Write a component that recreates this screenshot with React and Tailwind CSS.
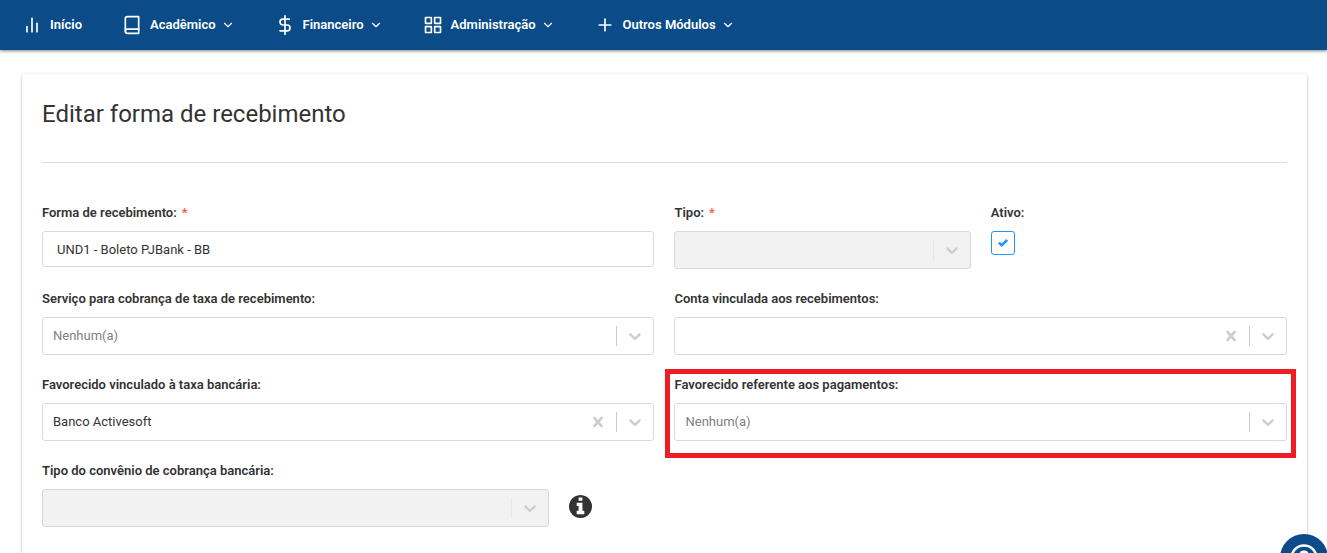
import React, { useState } from 'react';
import { ChevronDown, CircleHelp } from 'lucide-react';
import { FiBarChart2, FiBook, FiDollarSign, FiGrid, FiPlus } from 'react-icons/fi';

const menu = [
  { label: 'Início', icon: FiBarChart2 },
  { label: 'Acadêmico', icon: FiBook, hasSub: true },
  { label: 'Financeiro', icon: FiDollarSign, hasSub: true },
  { label: 'Administração', icon: FiGrid, hasSub: true },
  { label: 'Outros Módulos', icon: FiPlus, hasSub: true },
];

function Label({ htmlFor, required, children }) {
  return (
    <label htmlFor={htmlFor} className="block h-5 mb-2 text-[13px] leading-5 font-semibold whitespace-nowrap">
      {children}
      {required && <span className="ml-[5px] text-[#ff5252]">*</span>}
    </label>
  );
}

function SelectBox({ id, name, value, options = [], disabled, placeholder, clearable, onChange }) {
  const box = disabled ? 'bg-[#f2f2f2]' : 'bg-white';
  const line = disabled ? 'bg-[#e6e6e6]' : 'bg-[#cccccc]';
  return (
    <div className={`flex items-center h-[38px] w-full border border-[#d9d9d9] rounded-[3px] ${box}`}>
      <select
        id={id}
        name={name}
        value={value}
        disabled={disabled}
        onChange={onChange}
        className={`flex-1 min-w-0 h-full px-[10px] appearance-none bg-transparent text-[13px] focus:outline-none ${placeholder ? 'text-[#808080]' : 'text-[#333333]'}`}
      >
        {options.map((opt) => (
          <option key={opt} value={opt}>{opt}</option>
        ))}
      </select>
      {clearable && (
        <button type="button" aria-label="Limpar" className="px-2 text-[#cccccc]">
          <svg viewBox="0 0 20 20" className="w-5 h-5 fill-current stroke-current" strokeWidth="0.4">
            <path d="M14.348 14.849c-0.469 0.469-1.229 0.469-1.697 0l-2.651-3.030-2.651 3.029c-0.469 0.469-1.229 0.469-1.697 0-0.469-0.469-0.469-1.229 0-1.697l2.758-3.15-2.759-3.152c-0.469-0.469-0.469-1.228 0-1.697s1.228-0.469 1.697 0l2.652 3.031 2.651-3.031c0.469-0.469 1.228-0.469 1.697 0s0.469 1.229 0 1.697l-2.758 3.152 2.758 3.15c0.469 0.469 0.469 1.229 0 1.698z" />
          </svg>
        </button>
      )}
      <span className={`w-px h-5 ${line}`} />
      <span className="px-2 text-[#cccccc]">
        <svg viewBox="0 0 20 20" className="w-5 h-5 fill-current">
          <path d="M4.516 7.548c0.436-0.446 1.043-0.481 1.576 0l3.908 3.747 3.908-3.747c0.533-0.481 1.141-0.446 1.574 0 0.436 0.445 0.408 1.197 0 1.615-0.406 0.418-4.695 4.502-4.695 4.502-0.217 0.223-0.502 0.335-0.787 0.335s-0.57-0.112-0.789-0.335c0 0-4.287-4.084-4.695-4.502s-0.436-1.17 0-1.615z" />
        </svg>
      </span>
    </div>
  );
}

function InfoIcon() {
  return (
    <svg viewBox="0 0 1536 1536" className="w-[23px] h-[23px] fill-current">
      <path d="M1024 1248v-160q0-14-9-23t-23-9h-96v-512q0-14-9-23t-23-9h-320q-14 0-23 9t-9 23v160q0 14 9 23t23 9h96v320h-96q-14 0-23 9t-9 23v160q0 14 9 23t23 9h448q14 0 23-9t9-23zM896 352v-160q0-14-9-23t-23-9h-192q-14 0-23 9t-9 23v160q0 14 9 23t23 9h192q14 0 23-9t9-23zM1536 768q0 209-103 385.5t-279.5 279.5-385.5 103-385.5-103-279.5-279.5-103-385.5 103-385.5 279.5-279.5 385.5-103 385.5 103 279.5 279.5 103 385.5z" />
    </svg>
  );
}

export default function App() {
  const [form, setForm] = useState({
    nome: 'UND1 - Boleto PJBank - BB',
    ativo: true,
    servico: 'Nenhum(a)',
    taxa: 'Banco Activesoft',
    pagamentos: 'Nenhum(a)',
  });

  const handleChange = (e) => {
    const { name, value, type, checked } = e.target;
    setForm(prev => ({ ...prev, [name]: type === 'checkbox' ? checked : value }));
  };

  return (
    <div className="min-h-screen bg-white text-[#333333] font-['Roboto',sans-serif]">
      <header className="h-[50px] bg-[#0a4b88] shadow-[0_1px_3px_rgba(0,0,0,0.5)]">
        <nav className="flex items-center gap-10 h-full px-[22px]">
          {menu.map(({ label, icon: Icon, hasSub }) => (
            <a key={label} href="#" className="flex items-center text-[13px] leading-5 font-semibold text-white whitespace-nowrap">
              <Icon className="w-5 h-5 mr-2" />
              {label}
              {hasSub && <ChevronDown className="w-3.5 h-3.5 ml-[5px]" />}
            </a>
          ))}
        </nav>
      </header>

      <main className="pl-[22px] pr-5 pt-6">
        <div className="px-5 pb-12 rounded-[3px] bg-white shadow-[0_1px_3px_rgba(0,0,0,0.3)]">
          <h1 className="pt-6 pb-8 text-2xl leading-8 font-normal border-b border-[#dddddd]">Editar forma de recebimento</h1>

          <form className="grid grid-cols-12 gap-5 pt-10" onSubmit={(e) => e.preventDefault()}>
            <div className="col-span-6">
              <Label htmlFor="nome" required>Forma de recebimento:</Label>
              <input
                id="nome"
                name="nome"
                type="text"
                value={form.nome}
                onChange={handleChange}
                className="block w-full h-9 px-[14px] text-[13px] border border-[#d9d9d9] rounded-[3px] focus:outline-none"
              />
            </div>
            <div className="col-span-3">
              <Label htmlFor="tipo" required>Tipo:</Label>
              <SelectBox id="tipo" name="tipo" disabled />
            </div>
            <div className="col-span-3">
              <Label htmlFor="ativo">Ativo:</Label>
              <div className="grid w-6 h-6">
                <input
                  id="ativo"
                  name="ativo"
                  type="checkbox"
                  checked={form.ativo}
                  onChange={handleChange}
                  className="col-start-1 row-start-1 w-6 h-6 appearance-none border border-[#2196f3] rounded-[3px]"
                />
                {form.ativo && (
                  <svg viewBox="0 0 10 8" className="col-start-1 row-start-1 place-self-center w-[10px] h-2 pointer-events-none" fill="none" stroke="#2196f3" strokeWidth="2.5">
                    <path d="M0.8 3.6 L3.7 6.2 L9.2 1" />
                  </svg>
                )}
              </div>
            </div>

            <div className="col-span-6">
              <Label htmlFor="servico">Serviço para cobrança de taxa de recebimento:</Label>
              <SelectBox id="servico" name="servico" value={form.servico} options={['Nenhum(a)']} placeholder onChange={handleChange} />
            </div>
            <div className="col-span-6">
              <Label htmlFor="conta">Conta vinculada aos recebimentos:</Label>
              <SelectBox id="conta" name="conta" clearable />
            </div>

            <div className="col-span-6">
              <Label htmlFor="taxa">Favorecido vinculado à taxa bancária:</Label>
              <SelectBox id="taxa" name="taxa" value={form.taxa} options={['Banco Activesoft']} clearable onChange={handleChange} />
            </div>
            <div className="relative col-span-6">
              <Label htmlFor="pagamentos">Favorecido referente aos pagamentos:</Label>
              <SelectBox id="pagamentos" name="pagamentos" value={form.pagamentos} options={['Nenhum(a)']} placeholder onChange={handleChange} />
              {/* highlight frame */}
              <div className="absolute -inset-x-[9px] -top-[6px] -bottom-[17px] border-[5px] border-[#ee1c24] pointer-events-none" />
            </div>

            <div className="col-span-5">
              <Label htmlFor="convenio">Tipo do convênio de cobrança bancária:</Label>
              <SelectBox id="convenio" name="convenio" disabled />
            </div>
            <div className="col-span-1 flex items-end pb-[9px]">
              <button type="button" aria-label="Informações">
                <InfoIcon />
              </button>
            </div>
          </form>
        </div>
      </main>

      <button
        type="button"
        aria-label="Ajuda"
        className="fixed -right-px -bottom-[29px] flex items-center justify-center w-12 h-12 rounded-full bg-[#0a4b88] text-white"
      >
        <CircleHelp className="w-[30px] h-[30px]" />
      </button>
    </div>
  );
}
